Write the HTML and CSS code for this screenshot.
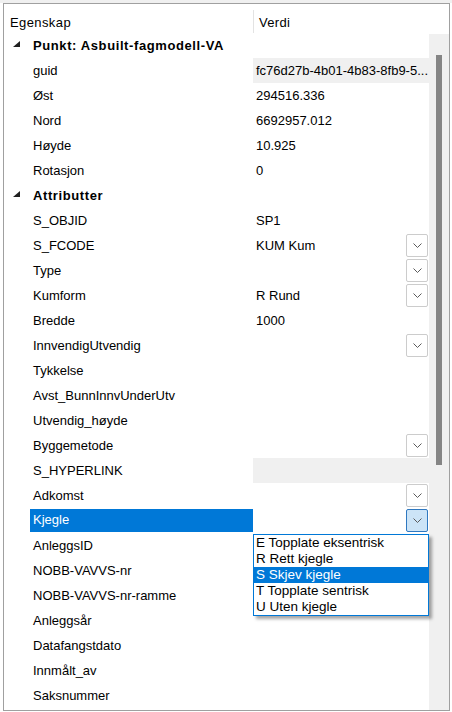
FILE: index.html
```html
<!DOCTYPE html>
<html lang="no">
<head>
<meta charset="utf-8">
<title>Egenskaper</title>
<link rel="stylesheet" href="styles.css">
</head>
<body>
<div class="strip"></div>
<div class="frame">
  <div class="header">
    <div class="h-name">Egenskap</div>
    <div class="h-value">Verdi</div>
  </div>
  <div class="main">
    <div class="grid">
      <div class="row cat">
        <div class="margin"><svg class="tri" width="8" height="7" viewBox="0 0 8 7"><polygon points="0,6 7,6 7,0" fill="#202020"/></svg></div>
        <div class="cat-label">Punkt: Asbuilt-fagmodell-VA</div>
      </div>
      <div class="row"><div class="margin"></div><div class="label">guid</div><div class="value ro"><span class="vtext">fc76d27b-4b01-4b83-8fb9-5...</span></div></div>
      <div class="row"><div class="margin"></div><div class="label">Øst</div><div class="value"><span class="vtext">294516.336</span></div></div>
      <div class="row"><div class="margin"></div><div class="label">Nord</div><div class="value"><span class="vtext">6692957.012</span></div></div>
      <div class="row"><div class="margin"></div><div class="label">Høyde</div><div class="value"><span class="vtext">10.925</span></div></div>
      <div class="row"><div class="margin"></div><div class="label">Rotasjon</div><div class="value"><span class="vtext">0</span></div></div>
      <div class="row cat">
        <div class="margin"><svg class="tri" width="8" height="7" viewBox="0 0 8 7"><polygon points="0,6 7,6 7,0" fill="#202020"/></svg></div>
        <div class="cat-label">Attributter</div>
      </div>
      <div class="row"><div class="margin"></div><div class="label">S_OBJID</div><div class="value"><span class="vtext">SP1</span></div></div>
      <div class="row"><div class="margin"></div><div class="label">S_FCODE</div><div class="value"><span class="vtext">KUM Kum</span><span class="btn"><svg width="9" height="5" viewBox="0 0 9 5"><polyline points="0.5,0.5 4.5,4.5 8.5,0.5" fill="none" stroke="#5a5a5a" stroke-width="1"/></svg></span></div></div>
      <div class="row"><div class="margin"></div><div class="label">Type</div><div class="value"><span class="vtext"></span><span class="btn"><svg width="9" height="5" viewBox="0 0 9 5"><polyline points="0.5,0.5 4.5,4.5 8.5,0.5" fill="none" stroke="#5a5a5a" stroke-width="1"/></svg></span></div></div>
      <div class="row"><div class="margin"></div><div class="label">Kumform</div><div class="value"><span class="vtext">R Rund</span><span class="btn"><svg width="9" height="5" viewBox="0 0 9 5"><polyline points="0.5,0.5 4.5,4.5 8.5,0.5" fill="none" stroke="#5a5a5a" stroke-width="1"/></svg></span></div></div>
      <div class="row"><div class="margin"></div><div class="label">Bredde</div><div class="value"><span class="vtext">1000</span></div></div>
      <div class="row"><div class="margin"></div><div class="label">InnvendigUtvendig</div><div class="value"><span class="vtext"></span><span class="btn"><svg width="9" height="5" viewBox="0 0 9 5"><polyline points="0.5,0.5 4.5,4.5 8.5,0.5" fill="none" stroke="#5a5a5a" stroke-width="1"/></svg></span></div></div>
      <div class="row"><div class="margin"></div><div class="label">Tykkelse</div><div class="value"><span class="vtext"></span></div></div>
      <div class="row"><div class="margin"></div><div class="label">Avst_BunnInnvUnderUtv</div><div class="value"><span class="vtext"></span></div></div>
      <div class="row"><div class="margin"></div><div class="label">Utvendig_høyde</div><div class="value"><span class="vtext"></span></div></div>
      <div class="row"><div class="margin"></div><div class="label">Byggemetode</div><div class="value"><span class="vtext"></span><span class="btn"><svg width="9" height="5" viewBox="0 0 9 5"><polyline points="0.5,0.5 4.5,4.5 8.5,0.5" fill="none" stroke="#5a5a5a" stroke-width="1"/></svg></span></div></div>
      <div class="row"><div class="margin"></div><div class="label">S_HYPERLINK</div><div class="value ro"><span class="vtext"></span></div></div>
      <div class="row"><div class="margin"></div><div class="label">Adkomst</div><div class="value"><span class="vtext"></span><span class="btn"><svg width="9" height="5" viewBox="0 0 9 5"><polyline points="0.5,0.5 4.5,4.5 8.5,0.5" fill="none" stroke="#5a5a5a" stroke-width="1"/></svg></span></div></div>
      <div class="row"><div class="margin"></div><div class="label sel">Kjegle</div><div class="value"><span class="vtext"></span><span class="btn focus"><svg width="9" height="5" viewBox="0 0 9 5"><polyline points="0.5,0.5 4.5,4.5 8.5,0.5" fill="none" stroke="#5a5a5a" stroke-width="1"/></svg></span></div></div>
      <div class="row"><div class="margin"></div><div class="label">AnleggsID</div><div class="value"><span class="vtext"></span></div></div>
      <div class="row"><div class="margin"></div><div class="label">NOBB-VAVVS-nr</div><div class="value"><span class="vtext"></span></div></div>
      <div class="row"><div class="margin"></div><div class="label">NOBB-VAVVS-nr-ramme</div><div class="value"><span class="vtext"></span></div></div>
      <div class="row"><div class="margin"></div><div class="label">Anleggsår</div><div class="value"><span class="vtext"></span></div></div>
      <div class="row"><div class="margin"></div><div class="label">Datafangstdato</div><div class="value"><span class="vtext"></span></div></div>
      <div class="row"><div class="margin"></div><div class="label">Innmålt_av</div><div class="value"><span class="vtext"></span></div></div>
      <div class="row"><div class="margin"></div><div class="label">Saksnummer</div><div class="value"><span class="vtext"></span></div></div>
    </div>
    <div class="scroll"><div class="thumb"></div></div>
  </div>
  <div class="dropdown">
    <div class="opt">E Topplate eksentrisk</div>
    <div class="opt">R Rett kjegle</div>
    <div class="opt sel">S Skjev kjegle</div>
    <div class="opt">T Topplate sentrisk</div>
    <div class="opt">U Uten kjegle</div>
  </div>
</div>
</body>
</html>
```
FILE: styles.css
```css
* { box-sizing: border-box; }
html, body { margin: 0; padding: 0; }
body {
  width: 452px;
  height: 712px;
  overflow: hidden;
  background: #ffffff;
  font-family: "Liberation Sans", Arial, sans-serif;
  font-size: 13px;
  color: #000000;
}
.strip { height: 3px; background: #f0f0f0; }
.frame {
  position: relative;
  margin-left: 3px;
  width: 447px;
  height: 708px;
  border: 1px solid #a0a0a0;
  background: #ffffff;
  display: flex;
  flex-direction: column;
  overflow: hidden;
}
.header { height: 29px; flex: none; display: flex; }
.h-name { width: 249px; padding: 11px 0 0 6px; line-height: 15px; letter-spacing: 0.4px; }
.h-value {
  flex: 1;
  margin-top: 6px;
  border-left: 1px solid #e3e3e3;
  padding: 5px 0 0 5px;
  line-height: 15px;
  letter-spacing: 0.3px;
}
.main { flex: 1; min-height: 0; display: flex; }
.grid { width: 425px; flex: none; overflow: hidden; }
.row { height: 25px; display: flex; }
.margin { width: 26px; flex: none; display: flex; align-items: center; padding: 0 0 2px 9px; }
.label {
  width: 223px;
  flex: none;
  padding: 1px 0 0 3px;
  line-height: 23px;
  white-space: nowrap;
}
.label.sel {
  background: #0078d7;
  color: #ffffff;
  border-top: 1px solid #ffffff;
  border-bottom: 1px solid #ffffff;
  padding-top: 0;
  line-height: 22px;
}
.cat-label {
  flex: 1;
  padding: 1px 0 0 3px;
  line-height: 23px;
  font-weight: bold;
  letter-spacing: 0.6px;
  white-space: nowrap;
}
.value { width: 176px; flex: none; display: flex; }
.value.ro { background: #f0f0f0; }
.vtext {
  flex: 1;
  padding: 1px 0 0 3px;
  line-height: 23px;
  white-space: nowrap;
  overflow: hidden;
}
.btn {
  flex: none;
  width: 22px;
  height: 23px;
  margin: 1px 1px 0 0;
  border: 1px solid #cccccc;
  border-radius: 2px;
  background: #ffffff;
  display: flex;
  align-items: center;
  justify-content: center;
}
.btn.focus { background: #cce4f7; border-color: #2f78c0; }
.scroll {
  width: 20px;
  flex: none;
  margin-top: 1px;
  background: #f0f0f0;
  padding: 21px 0 0 7px;
}
.thumb { width: 6px; height: 410px; background: #858585; }
.dropdown {
  position: absolute;
  left: 249px;
  top: 530px;
  width: 176px;
  height: 82px;
  border: 1px solid #0078d7;
  background: #ffffff;
  box-shadow: 3px 3px 3px rgba(0, 0, 0, 0.35);
  font-size: 13.5px;
}
.opt { height: 16px; line-height: 16px; padding-left: 2px; white-space: nowrap; }
.opt.sel { background: #0078d7; color: #ffffff; }
```
